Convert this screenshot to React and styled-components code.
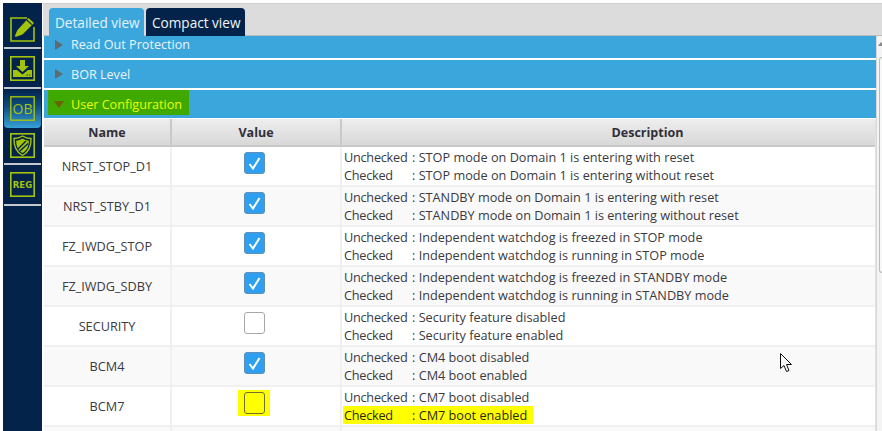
import React from 'react';
import styled, { createGlobalStyle } from 'styled-components';

const Global = createGlobalStyle`
  html, body { margin: 0; padding: 0; background: #fff; width: 882px; height: 431px; overflow: hidden; }
  * { box-sizing: border-box; }
  #root { width: 882px; height: 431px; }
`;
const Page = styled.div`
  position: relative; display: flex; width: 882px; height: 431px; padding: 3px 0 0 3px; overflow: hidden;
  font-family: "Open Sans", "Liberation Sans", sans-serif; background: #fff; color: #333;
`;
const Sidebar = styled.nav`
  width: 39px; flex: none; margin-right: 1px; background: #03234b; display: flex; flex-direction: column;
`;
const NavItem = styled.div`
  height: ${p => p.$h}px; padding-top: ${p => p.$pt || 0}px; display: flex; align-items: center; justify-content: center; flex: none;
  ${p => p.$active && `background: linear-gradient(#03234b 0%, #0f4d80 45%, #37a0d6 100%); border-radius: 0 0 4px 4px; margin: 0 0 0 1px; width: 37px;`}
`;
const NavRule = styled.div`
  height: 2px; margin: 0 1px 0 1px; background: #c4c8cf; flex: none;
`;
const Main = styled.main`
  flex: 1; min-width: 0; display: flex; flex-direction: column;
`;
const TabBar = styled.div`
  height: 33px; flex: none; background: #dcdcdc; border-top: 1px solid #d0d0d0; border-bottom: 1px solid #bdbdbd;
  display: flex; align-items: flex-end; gap: 2px; padding-left: 6px;
`;
const Tab = styled.div`
  height: 28px; margin-bottom: -1px; padding: 0 6px; border-radius: 4px 4px 0 0; display: flex; align-items: center; white-space: nowrap;
  background: ${p => p.$active ? '#3ba6db' : '#03234b'}; color: ${p => p.$active ? '#e4f3fb' : '#f2f5f8'};
  font-size: 13.6px; width: ${p => p.$w}px;
`;
const Body = styled.div`
  flex: 1; min-height: 0; display: flex; overflow: hidden;
`;
const Content = styled.div`
  width: 832px; flex: none; margin-left: 1px; display: flex; flex-direction: column; overflow: hidden;
`;
const Section = styled.div`
  height: ${p => p.$h}px; flex: none; margin-bottom: 2px; background: #3ba6db; color: #eaf4fa; font-size: 12.6px;
  display: flex; align-items: ${p => p.$clip ? 'flex-start' : 'center'}; padding-left: 1px;
  ${p => p.$open && `align-items: flex-start; margin-bottom: 1px;`}
`;
const SectionTitle = styled.div`
  display: flex; align-items: center; gap: 8px; padding-left: 10px; height: ${p => p.$h ? p.$h + 'px' : 'auto'};
  ${p => p.$hl && `background: #3fa900; color: #e8ff00; width: 141px; margin-left: 3px; padding: 4px 0 0 6px; height: 25px;`}
`;
const Arrow = styled.span`
  width: 0; height: 0; flex: none;
  ${p => p.$open
    ? `border-left: 5px solid transparent; border-right: 5px solid transparent; border-top: 7px solid #6b6300; margin-right: -1px;`
    : `border-top: 5px solid transparent; border-bottom: 5px solid transparent; border-left: 8px solid #5d6b75;`}
`;
const Grid = styled.div`
  display: grid; grid-template-columns: 128px 170px 1fr; border-right: 1px solid #e2e2e2;
`;
const Head = styled.div`
  height: 28px; padding: 1px 0 0 ${p => p.$shift || 0}px; display: flex; align-items: center; justify-content: center; font-weight: 700; font-size: 12.5px; color: #2f2f38;
  background: linear-gradient(#efeeef, #d8d8d8); border-bottom: 2px solid #c8c8c8; border-right: ${p => p.$shift ? 0 : '2px solid #c9c9c9'};
`;
const Cell = styled.div`
  height: 40px; display: flex; align-items: center; justify-content: ${p => p.$left ? 'flex-start' : 'center'};
  background: ${p => p.$odd ? '#f9f9f9' : '#fff'}; border-bottom: 2px solid #f0f0f0;
  border-right: ${p => p.$left ? 0 : '2px solid #f0f0f0'}; padding-left: ${p => p.$left ? '1px' : 0};
  font-size: 12.7px; color: #3a3a42;
`;
const Lines = styled.div`
  display: flex; flex-direction: column; line-height: 18px; font-size: 12.7px; color: #3a3a42;
`;
const Line = styled.div`
  display: flex; white-space: pre; width: fit-content; padding: 0 6px 0 1px;
  ${p => p.$hl && `background: #ffff00; color: #2a2a10;`}
`;
const Key = styled.span`
  display: inline-block; width: 68px; letter-spacing: -0.25px;
`;
const Mark = styled.div`
  display: flex; align-items: center; justify-content: center; margin: -6px 0 0 -4px; height: 26px;
  ${p => p.$hl && `background: #ffff00; width: 32px;`}
`;
const Box = styled.div`
  width: 21px; height: 22px; border-radius: 3px; display: flex; align-items: center; justify-content: center;
  border: 1.5px solid ${p => p.$kind === 'on' ? '#5f8fb4' : p.$kind === 'hl' ? '#6f6f30' : '#a8a8a8'};
  background: ${p => p.$kind === 'on' ? '#2f9ff0' : p.$kind === 'hl' ? '#ffff00' : '#fff'};
`;
const Scrollbar = styled.div`
  flex: 1; min-width: 0; background: #f4f4f4; border-left: 1px solid #d8d8d8; position: relative; display: flex; flex-direction: column; align-items: center;
`;
const ScrollArrow = styled.div`
  width: 0; height: 0; margin: 6px 0 0 2px; flex: none; border-left: 3px solid transparent; border-right: 3px solid transparent; border-bottom: 4px solid #888;
`;
const ScrollThumb = styled.div`
  width: 3px; height: 216px; margin: 11px 0 0 1px; border: 1px solid #bbb; border-right: 0; border-radius: 3px 0 0 3px; background: #f8f8f8; flex: none;
`;
const CursorWrap = styled.div`
  position: absolute; left: 780px; top: 353px; width: 13px; height: 20px; line-height: 0;
`;

const Icon = ({ children, w = 25, h = 25 }) => (
  <svg width={w} height={h} viewBox="0 0 25 25" fill="none">
    {children}
  </svg>
);
const LIME = '#a4c40b';

const rows = [
  ['NRST_STOP_D1', 'on', 'STOP mode on Domain 1 is entering with reset', 'STOP mode on Domain 1 is entering without reset'],
  ['NRST_STBY_D1', 'on', 'STANDBY mode on Domain 1 is entering with reset', 'STANDBY mode on Domain 1 is entering without reset'],
  ['FZ_IWDG_STOP', 'on', 'Independent watchdog is freezed in STOP mode', 'Independent watchdog is running in STOP mode'],
  ['FZ_IWDG_SDBY', 'on', 'Independent watchdog is freezed in STANDBY mode', 'Independent watchdog is running in STANDBY mode'],
  ['SECURITY', 'off', 'Security feature disabled', 'Security feature enabled'],
  ['BCM4', 'on', 'CM4 boot disabled', 'CM4 boot enabled'],
  ['BCM7', 'hl', 'CM7 boot disabled', 'CM7 boot enabled'],
];

export default function App() {
  return (
    <Page>
      <Global />
      <Sidebar>
        <NavItem $h={44} $pt={8}>
          <Icon>
            <path d="M17 1H1V24H24V10" stroke={LIME} strokeWidth="1.6" />
            <path d="M5 18.5 L7.5 13 L18.5 1 L24 6 L12.5 17.5 L5.5 20 Z" fill={LIME} />
            <path d="M16.8 3 L21.8 7.6" stroke="#03234b" strokeWidth="1.1" />
          </Icon>
        </NavItem>
        <NavRule />
        <NavItem $h={38}>
          <Icon>
            <rect x="0.8" y="0.8" width="23.4" height="23.4" stroke={LIME} strokeWidth="1.6" />
            <path d="M10 4H15V10H19L12.5 16L6 10H10Z" fill={LIME} />
            <path d="M3 14H7L12.5 18.5L18 14H22V21H3Z" fill={LIME} />
            <path d="M16.5 19H17.8M19 19H20.3" stroke="#03234b" strokeWidth="1" />
          </Icon>
        </NavItem>
        <NavRule />
        <NavItem $h={39} $active>
          <Icon>
            <rect x="0.8" y="0.8" width="23.4" height="23.4" stroke={LIME} strokeWidth="1.4" />
            <text x="12.5" y="18" textAnchor="middle" fontFamily="Open Sans, sans-serif" fontSize="14" fill={LIME}>OB</text>
          </Icon>
        </NavItem>
        <NavItem $h={35}>
          <Icon>
            <rect x="0.8" y="0.8" width="23.4" height="23.4" stroke={LIME} strokeWidth="1.6" />
            <path d="M12.5 3 C15.5 5 18 5.5 21 5.5 C21.3 13 19 19 12.5 22.5 C6 19 3.7 13 4 5.5 C7 5.5 9.5 5 12.5 3Z" stroke={LIME} strokeWidth="1.4" />
            <path d="M12.5 5.5 C14.8 7 16.8 7.5 18.8 7.5 C18.8 13 17 17.5 12.5 20 C8 17.5 6.2 13 6.2 7.5 C8.2 7.5 10.2 7 12.5 5.5Z" fill={LIME} />
            <path d="M8 16 L16 8 M10 18 L18 10.5" stroke="#03234b" strokeWidth="1.4" />
          </Icon>
        </NavItem>
        <NavRule />
        <NavItem $h={39}>
          <Icon>
            <rect x="0.8" y="0.8" width="23.4" height="23.4" stroke={LIME} strokeWidth="1.6" />
            <text x="12.5" y="16" textAnchor="middle" fontFamily="DejaVu Sans, sans-serif" fontWeight="700" fontSize="8.5" fill={LIME}>REG</text>
          </Icon>
        </NavItem>
        <NavRule />
      </Sidebar>
      <Main>
        <TabBar>
          <Tab $active $w={95}>Detailed view</Tab>
          <Tab $w={99}>Compact view</Tab>
        </TabBar>
        <Body>
          <Content>
            <Section $h={22} $clip><SectionTitle $h={17}><Arrow />Read Out Protection</SectionTitle></Section>
            <Section $h={28}><SectionTitle><Arrow />BOR Level</SectionTitle></Section>
            <Section $h={28} $open><SectionTitle $hl><Arrow $open />User Configuration</SectionTitle></Section>
            <Grid>
              <Head>Name</Head>
              <Head>Value</Head>
              <Head $shift={78}>Description</Head>
              {rows.map(([name, kind, a, b], i) => (
                <React.Fragment key={name}>
                  <Cell $odd={i % 2 === 1}>{name}</Cell>
                  <Cell $odd={i % 2 === 1}>
                    <Mark $hl={kind === 'hl'}>
                      <Box $kind={kind}>
                        {kind === 'on' && (
                          <svg width="15" height="15" viewBox="0 0 15 15" fill="none">
                            <path d="M2.5 8 L6 12.5 L12.5 2" stroke="#fff" strokeWidth="2" />
                          </svg>
                        )}
                      </Box>
                    </Mark>
                  </Cell>
                  <Cell $odd={i % 2 === 1} $left>
                    <Lines>
                      <Line><Key>Unchecked</Key>: {a}</Line>
                      <Line $hl={kind === 'hl'}><Key>Checked</Key>: {b}</Line>
                    </Lines>
                  </Cell>
                </React.Fragment>
              ))}
              <Cell $odd />
              <Cell $odd />
              <Cell $odd $left />
            </Grid>
          </Content>
          <Scrollbar>
            <ScrollArrow />
            <ScrollThumb />
          </Scrollbar>
        </Body>
      </Main>
      <CursorWrap>
        <svg width="13" height="20" viewBox="0 0 13 20" fill="none">
          <path d="M0.5 0.5 V15.5 L4 12.5 L6.5 18.5 L9 17.5 L6.5 11.5 H11.5 Z" fill="#fff" stroke="#111" strokeWidth="1" />
        </svg>
      </CursorWrap>
    </Page>
  );
}
